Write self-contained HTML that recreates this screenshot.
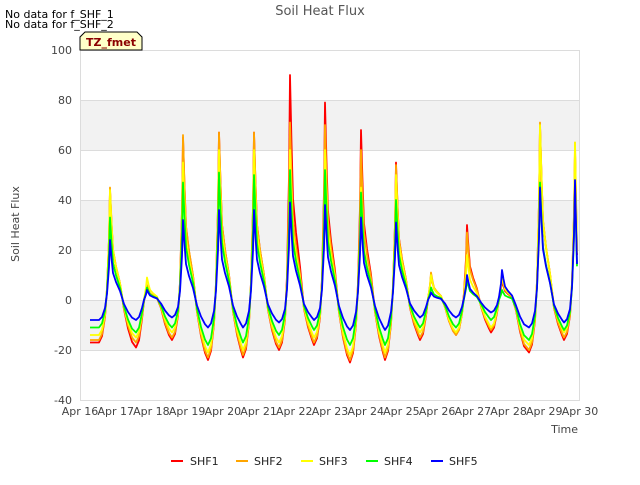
<!DOCTYPE html>
<html><head><meta charset="utf-8"><style>
body{margin:0;background:#fff;font-family:"Liberation Sans","DejaVu Sans",sans-serif}
</style></head><body>
<svg id="s" width="640" height="480" xmlns="http://www.w3.org/2000/svg" font-family="DejaVu Sans, Liberation Sans, sans-serif">
<rect width="640" height="480" fill="#fff"/>
<rect x="80" y="100" width="500" height="50" fill="#f2f2f2"/>
<rect x="80" y="200" width="500" height="50" fill="#f2f2f2"/>
<rect x="80" y="300" width="500" height="50" fill="#f2f2f2"/>
<g stroke="#dcdcdc" stroke-width="1">
<line x1="80" x2="580" y1="50.5" y2="50.5"/><line x1="80" x2="580" y1="100.5" y2="100.5"/>
<line x1="80" x2="580" y1="150.5" y2="150.5"/><line x1="80" x2="580" y1="200.5" y2="200.5"/>
<line x1="80" x2="580" y1="250.5" y2="250.5"/><line x1="80" x2="580" y1="300.5" y2="300.5"/>
<line x1="80" x2="580" y1="350.5" y2="350.5"/><line x1="80" x2="580" y1="400.5" y2="400.5"/>
<line x1="80.5" x2="80.5" y1="50" y2="400"/><line x1="579.5" x2="579.5" y1="50" y2="400"/>
</g>
<g id="lines" fill="none" stroke-width="1.8" stroke-linejoin="round"></g>
<g font-size="11" fill="#444" text-anchor="end">
<text x="72" y="54">100</text><text x="72" y="104">80</text><text x="72" y="154">60</text>
<text x="72" y="204">40</text><text x="72" y="254">20</text><text x="72" y="304">0</text>
<text x="72" y="354">-20</text><text x="72" y="404">-40</text>
</g>
<g id="xt" font-size="11" fill="#444" text-anchor="middle"></g>
<text x="320" y="15" font-size="13" fill="#555" text-anchor="middle">Soil Heat Flux</text>
<text x="578" y="433" font-size="11" fill="#444" text-anchor="end">Time</text>
<text transform="translate(19,224) rotate(-90)" font-size="11" fill="#444" text-anchor="middle">Soil Heat Flux</text>
<text x="5" y="18" font-size="11" fill="#000">No data for f_SHF_1</text>
<text x="5" y="28" font-size="11" fill="#000">No data for f_SHF_2</text>
<path d="M80,50 L80,37 L85,32 L137,32 L142,37 L142,50 Z" fill="#ffffc8" stroke="#000" stroke-width="1"/>
<text x="111" y="46" font-size="11" font-weight="bold" fill="#8b0000" text-anchor="middle">TZ_fmet</text>
<g font-size="11" fill="#222">
<line x1="171" x2="183" y1="461" y2="461" stroke="#f00" stroke-width="2"/><text x="190" y="465">SHF1</text>
<line x1="236" x2="248" y1="461" y2="461" stroke="#ffa500" stroke-width="2"/><text x="254" y="465">SHF2</text>
<line x1="301" x2="313" y1="461" y2="461" stroke="#ff0" stroke-width="2"/><text x="319" y="465">SHF3</text>
<line x1="366" x2="378" y1="461" y2="461" stroke="#0f0" stroke-width="2"/><text x="384" y="465">SHF4</text>
<line x1="431" x2="443" y1="461" y2="461" stroke="#00f" stroke-width="2"/><text x="449" y="465">SHF5</text>
</g>
</svg>
<script>
var NS="http://www.w3.org/2000/svg";
var xt=document.getElementById('xt');
for(var i=0;i<=14;i++){var t=document.createElementNS(NS,'text');t.setAttribute('x',80+i*500/14);t.setAttribute('y',415);t.textContent='Apr '+(16+i);xt.appendChild(t);}
var D=[
[110,[44,45,44,33,24],[-19,-17,-15,-13,-8]],
[147,[5,6,9,5,4],[-16,-15,-13,-11,-7]],
[183,[65,66,55,47,32],[-24,-23,-21,-18,-11]],
[219,[67,67,60,51,36],[-23,-22,-20,-17,-11]],
[254,[67,67,60,50,36],[-20,-19,-17,-14,-9]],
[290,[90,71,60,52,39],[-18,-17,-15,-12,-8]],
[325,[79,70,60,52,38],[-25,-24,-22,-18,-12]],
[361,[68,60,45,43,33],[-24,-23,-21,-18,-12]],
[396,[55,54,50,40,31],[-16,-15,-13,-11,-7]],
[431,[10,11,10,5,3],[-14,-14,-13,-11,-7]],
[467,[30,27,18,8,10],[-13,-12,-11,-8,-5]],
[502,[8,9,10,4,12],[-21,-20,-18,-16,-11]],
[540,[70,71,70,47,45],[-16,-15,-13,-12,-9]],
[575,[60,63,63,45,48],null]];
var start=[-17,-16,-14,-11,-8];
var cols=['#f00','#ffa500','#ff0','#0f0','#00f'];
function Y(v){return 300-v*2.5;}
var g=document.getElementById('lines');
for(var s=0;s<5;s++){
 var pts=[[90,start[s]]];var prevMin=start[s];
 for(var d=0;d<D.length;d++){
  var px=D[d][0],pk=D[d][1][s];
  pts.push([px-11,prevMin]);pts.push([px-8,prevMin*0.85]);pts.push([px-5,prevMin*0.4]);
  pts.push([px-3,prevMin*0.05+pk*0.12]);
  pts.push([px-1,pk*0.55]);pts.push([px,pk]);
  if(D[d][2]){var mn=D[d][2][s];
   pts.push([px+1.5,pk*0.7]);pts.push([px+3,pk*0.45]);pts.push([px+6,pk*0.3]);pts.push([px+10,pk*0.15]);
   pts.push([px+14,mn*0.2]);pts.push([px+18,mn*0.6]);pts.push([px+22,mn*0.88]);prevMin=mn;}
  else{pts.push([px+2,pk*0.3]);}
 }
 var str=pts.map(function(p){return p[0].toFixed(1)+','+Y(p[1]).toFixed(1);}).join(' ');
 var pl=document.createElementNS(NS,'polyline');pl.setAttribute('points',str);pl.setAttribute('stroke',cols[s]);g.appendChild(pl);
}
</script>
</body></html>
